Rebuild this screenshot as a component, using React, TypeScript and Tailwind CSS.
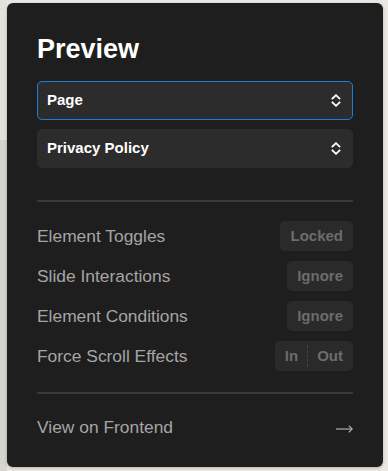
const rows = [
  { label: "Element Toggles", badge: "Locked" },
  { label: "Slide Interactions", badge: "Ignore" },
  { label: "Element Conditions", badge: "Ignore" },
];

const Chevrons = () => (
  <svg width="10" height="13" viewBox="0 0 10 13" fill="none" stroke="#ffffff" strokeWidth="1.8" strokeLinecap="square">
    <path d="M1.5 4.5 L5 1.2 L8.5 4.5" />
    <path d="M1.5 8.5 L5 11.8 L8.5 8.5" />
  </svg>
);

const Select = ({ label, focused }: { label: string; focused?: boolean }) => (
  <div
    className={`flex h-[39px] items-center justify-between rounded-[5px] bg-[#2c2c2c] pl-[9px] pr-[11px] border ${
      focused ? "border-[#1c7fd6]" : "border-[#2c2c2c]"
    }`}
  >
    <span className="text-[15px] font-bold text-white">{label}</span>
    <Chevrons />
  </div>
);

const Badge = ({ children }: { children: React.ReactNode }) => (
  <div className="flex h-[30px] items-center rounded-[5px] bg-[#2a2a2a] px-[10px] text-[15px] font-bold text-[#6c6c6c]">
    {children}
  </div>
);

export default function App() {
  return (
    <div
      className="flex h-[471px] w-[388px] overflow-hidden bg-[#e9e7e2]"
      style={{ fontFamily: '"Liberation Sans", Arial, sans-serif' }}
    >
      <div className="flex w-[7px] shrink-0 flex-col">
        <div className="h-[140px] bg-[#e4e2dd]" />
        <div className="flex-1 bg-[#d6d4d0]" />
      </div>
      <div className="mt-[3px] flex h-[464px] w-[376px] shrink-0 flex-col rounded-[6px] bg-[#1e1e1e] px-[30px] pt-[33px] shadow-[0_1px_3px_rgba(0,0,0,0.25)]">
        <h1 className="mb-[18px] text-[27px] font-bold leading-none text-white">Preview</h1>
        <div className="flex flex-col gap-[9px]">
          <Select label="Page" focused />
          <Select label="Privacy Policy" />
        </div>
        <div className="mt-[32px] h-[2px] bg-[#3a3a3a]" />
        <div className="mt-[19px] flex flex-col gap-[10px]">
          {rows.map((r) => (
            <div key={r.label} className="flex items-center justify-between">
              <span className="text-[17.4px] text-[#a5a5a5]">{r.label}</span>
              <Badge>{r.badge}</Badge>
            </div>
          ))}
          <div className="flex items-center justify-between">
            <span className="text-[17.4px] text-[#a5a5a5]">Force Scroll Effects</span>
            <div className="flex h-[30px] items-center rounded-[5px] bg-[#2a2a2a] px-[10px] text-[15px] font-bold text-[#6c6c6c]">
              <span>In</span>
              <span className="mx-[9px] h-[22px] border-l border-dashed border-[#444444]" />
              <span>Out</span>
            </div>
          </div>
        </div>
        <div className="mt-[21px] h-[2px] bg-[#3a3a3a]" />
        <div className="mt-[18px] flex h-[30px] items-center justify-between">
          <span className="text-[17.4px] text-[#a5a5a5]">View on Frontend</span>
          <svg className="mt-[4px]" width="17" height="8" viewBox="0 0 17 8" fill="none" stroke="#b0b0b0" strokeWidth="1.2">
            <path d="M0 4 H16" />
            <path d="M12.8 0.6 L16.2 4 L12.8 7.4" />
          </svg>
        </div>
      </div>
    </div>
  );
}
